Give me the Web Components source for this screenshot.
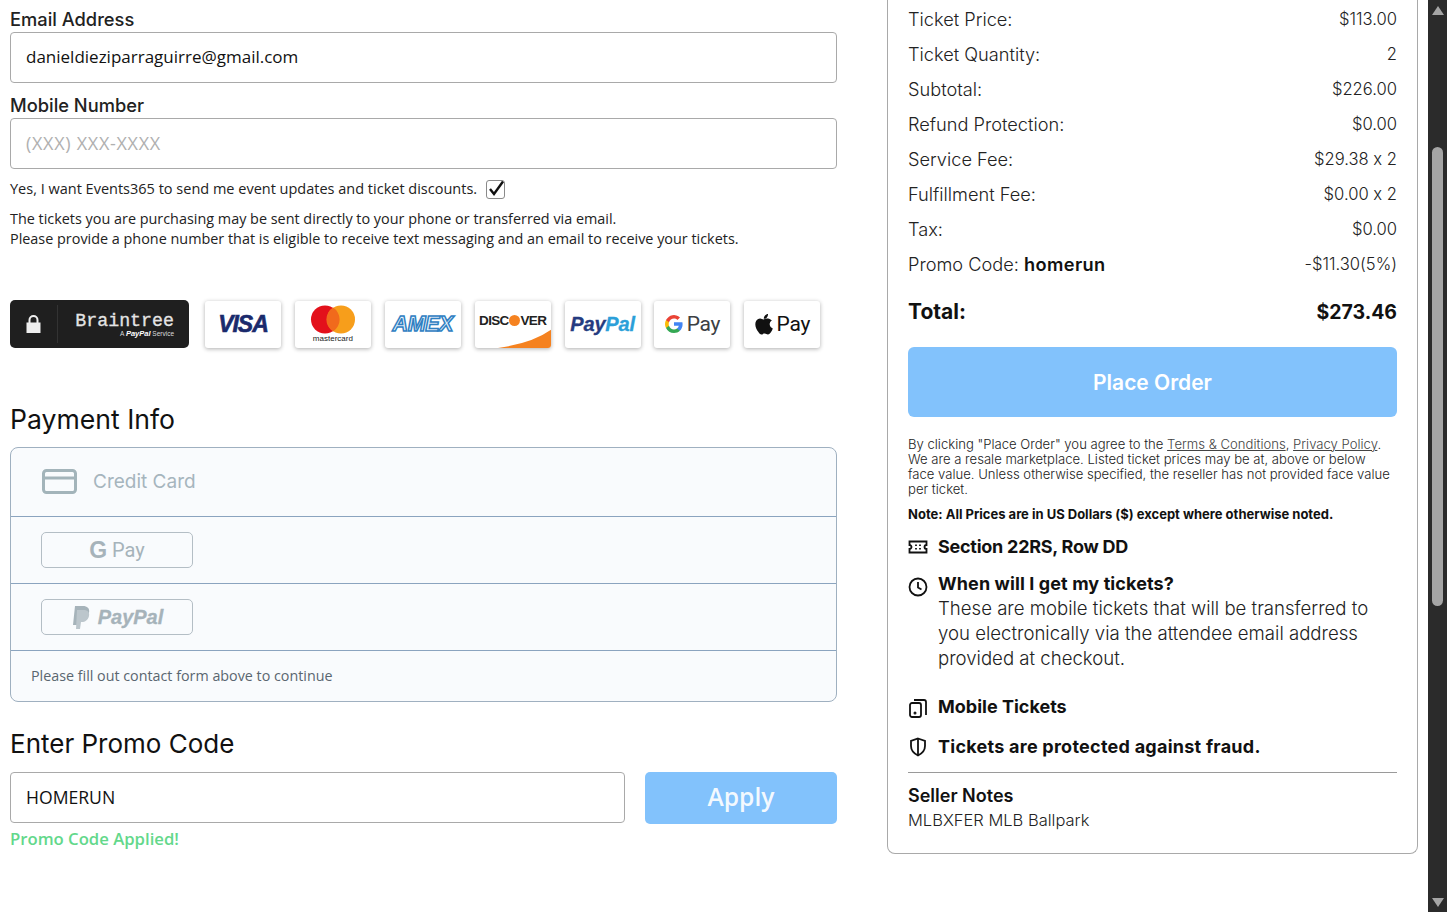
<!DOCTYPE html>
<html lang="en">
<head>
<meta charset="utf-8">
<title>Checkout</title>
<style>
  html, body { margin: 0; padding: 0; height: 100%; overflow: hidden; background: #fff; }
  body { font-family: "Open Sans", sans-serif; color: #111; }
</style>
</head>
<body>
<ev-page>
  <ev-contact slot="left"></ev-contact>
  <ev-pay-logos slot="left"></ev-pay-logos>
  <ev-payment slot="left"></ev-payment>
  <ev-promo slot="left"></ev-promo>
  <ev-summary slot="right"></ev-summary>
</ev-page>

<script>
const NUNITO = '"Open Sans", "Noto Sans", sans-serif';
const POPPINS = 'Inter, "Liberation Sans", sans-serif';

function define(name, html) {
    customElements.define(name, class extends HTMLElement {
        connectedCallback() {
            this.attachShadow({ mode: 'open' });
            this.shadowRoot.innerHTML = html;
        }
    });
}

define('ev-page', `
    <style>
        :host { display: flex; height: 912px; overflow: hidden; }
        .main { flex: 1; display: flex; align-items: flex-start; padding-left: 10px; }
        .left { width: 827px; margin-right: 50px; padding-top: 10px; }
        .right { width: 531px; }
        .bar { width: 19px; margin-left: 10px; background: #2b2b2b; display: flex; flex-direction: column; align-items: center; justify-content: space-between; padding: 6px 0 5px; box-sizing: border-box; position: relative; }
        .up { border: 6px solid transparent; border-top: 0; border-bottom: 9px solid #a5a5a5; }
        .down { border: 6px solid transparent; border-bottom: 0; border-top: 9px solid #a5a5a5; }
        .thumb { position: absolute; left: 4px; width: 11px; top: 147px; height: 459px; background: #a5a5a5; border-radius: 6px; }
    </style>
    <div class="main">
        <div class="left"><slot name="left"></slot></div>
        <div class="right"><slot name="right"></slot></div>
    </div>
    <div class="bar"><div class="up"></div><div class="thumb"></div><div class="down"></div></div>
`);

define('ev-contact', `
    <style>
        :host { display: block; font-family: ${NUNITO}; }
        label { display: block; font: 500 18.3px/19px ${POPPINS}; color: #222; margin-bottom: 3px; }
        .input { border: 1px solid #a9a9a9; border-radius: 4px; padding: 0 15px 2px; height: 47px; display: flex; align-items: center; font-size: 17px; color: #111; margin-bottom: 13px; }
        .ph { color: #b0b0b0; font-size: 18px; letter-spacing: .7px; }
        .opt { display: flex; align-items: center; font-size: 14.5px; line-height: 20px; color: #222; margin-top: -3px; gap: 9px; }
        .box { width: 17px; height: 17px; border: 1px solid #8a8a8a; border-radius: 3px; display: block; overflow: visible; }
        p { margin: 10px 0 0; font-size: 14.4px; line-height: 20px; color: #222; }
    </style>
    <label>Email Address</label>
    <div class="input">danieldieziparraguirre@gmail.com</div>
    <label>Mobile Number</label>
    <div class="input ph">(XXX) XXX-XXXX</div>
    <div class="opt">Yes, I want Events365 to send me event updates and ticket discounts.
        <svg class="box" viewBox="0 0 17 17"><path d="M3 8 L7 13 L16 0.500" fill="none" stroke="#111" stroke-width="2.4"/></svg>
    </div>
    <p>The tickets you are purchasing may be sent directly to your phone or transferred via email.<br>Please provide a phone number that is eligible to receive text messaging and an email to receive your tickets.</p>
`);

define('ev-pay-logos', `
    <style>
        :host { display: flex; margin-top: 51px; align-items: center; gap: 13.9px; }
        .bt { width: 179px; height: 48px; background: #1f1f1f; border-radius: 5px; color: #e4e4e4; display: flex; align-items: center; margin-right: 2.1px; }
        .lock { width: 47px; display: flex; justify-content: center; border-right: 1px solid #333; height: 38px; align-items: center; }
        .bt div.name { flex: 1; text-align: right; padding: 1px 15px 0 0; font: 400 18.3px/18px "Liberation Mono", monospace; -webkit-text-stroke: .3px #e4e4e4; }
        .bt small { display: block; font: 400 6.5px/8px "Liberation Sans", sans-serif; color: #ddd; -webkit-text-stroke: 0; }
        .bt em { font-weight: 700; font-size: 7.5px; color: #fff; }
        .card { width: 76px; height: 47px; background: #fff; border-radius: 3px; box-shadow: 0 1px 4px rgba(0,0,0,.32); display: flex; align-items: center; justify-content: center; position: relative; overflow: hidden; font-family: "Liberation Sans", sans-serif; }
        .visa { font: italic 700 23px "Liberation Sans", sans-serif; color: #1a2a6c; letter-spacing: -1px; -webkit-text-stroke: .6px #1a2a6c; }
        .mc { flex-direction: column; }
        .mc i { display: block; font: 400 8px/8px "Liberation Sans", sans-serif; color: #222; margin-top: 1px; }
        .amex { font: italic 700 21.5px "Liberation Sans", sans-serif; color: #e8f2fa; -webkit-text-stroke: 1.5px #2f80c2; letter-spacing: -.4px; }
        .disc { font: 700 13.5px/16px "Liberation Sans", sans-serif; color: #222; letter-spacing: -.7px; align-items: flex-start; padding-top: 12px; box-sizing: border-box; }
        .disc b { display: inline-block; width: 11px; height: 11px; font-size: 8px; line-height: 11px; text-align: center; letter-spacing: 0; border-radius: 50%; color: #f58220; background: #f58220; vertical-align: 1.5px; margin: 0 .5px; }
        .disc svg { position: absolute; left: 0; top: 0; }
        .pp { font: italic 700 20px "Liberation Sans", sans-serif; color: #253b80; letter-spacing: -.2px; -webkit-text-stroke: .3px #253b80; }
        .pp span { color: #2b9fd9; -webkit-text-stroke: .3px #2b9fd9; }
        .pay { font: 400 21px Roboto, "Liberation Sans", sans-serif; color: #3c4043; gap: 4px; letter-spacing: -.3px; }
        .apple { color: #111; gap: 3px; }
    </style>
    <div class="bt">
        <div class="lock"><svg width="17" height="20" viewBox="0 0 17 20"><path d="M4.500 9V6a4 4 0 0 1 8 0v3" fill="none" stroke="#eee" stroke-width="2"/><rect x="1.500" y="8.500" width="14" height="10.500" fill="#eee"/></svg></div>
        <div class="name">Braintree<small>A <em>PayPal</em> Service</small></div>
    </div>
    <div class="card visa">VISA</div>
    <div class="card mc">
        <svg width="46" height="29" viewBox="0 0 46 29"><circle cx="15" cy="14.500" r="14" fill="#e3111b"/><circle cx="31" cy="14.500" r="14" fill="#f79e1b"/><path d="M23 2.600a14 14 0 0 1 0 23.800a14 14 0 0 1 0-23.800z" fill="#f16a1c"/></svg>
        <i>mastercard</i>
    </div>
    <div class="card amex">AMEX</div>
    <div class="card disc">
        <svg width="77" height="47" viewBox="0 0 77 47"><path d="M23 47 Q58 42 77 28 V47 Z" fill="#f58220"/></svg>
        <span style="position:relative">DISC<b>O</b>VER</span>
    </div>
    <div class="card pp"><div>Pay<span>Pal</span></div></div>
    <div class="card pay">
        <svg width="18" height="18" viewBox="0 0 18 18"><path d="M17.600 9.200c0-.6-.1-1.300-.2-1.900H9v3.500h4.800a4.100 4.100 0 0 1-1.800 2.700v2.200h2.900c1.700-1.600 2.700-3.900 2.700-6.500z" fill="#4285f4"/><path d="M9 18c2.400 0 4.500-.8 5.900-2.200L12 13.500c-.8.500-1.800.9-3 .9-2.300 0-4.300-1.600-5-3.700H1v2.300A9 9 0 0 0 9 18z" fill="#34a853"/><path d="M4 10.700a5.400 5.400 0 0 1 0-3.400V5H1a9 9 0 0 0 0 8z" fill="#fbbc05"/><path d="M9 3.600c1.300 0 2.500.5 3.400 1.300L15 2.400A9 9 0 0 0 1 5l3 2.300c.7-2.100 2.700-3.700 5-3.700z" fill="#ea4335"/></svg>
        <span>Pay</span>
    </div>
    <div class="card pay apple">
        <svg width="19" height="22" viewBox="0 0 19 22"><path d="M13 1c.1 1.300-.4 2.500-1.100 3.400-.8.900-1.900 1.500-3.100 1.400-.1-1.200.5-2.500 1.200-3.300C10.700 1.600 12 1 13 1zM16.900 7.600c-1.900 1.200-2.300 2.800-2.200 4 .1 1.900 1.500 3.200 3.100 3.900-.5 1.300-1 2.500-1.900 3.700-.8 1.100-1.700 2.200-3 2.200-1.300 0-1.700-.8-3.200-.8s-2 .8-3.200.8c-1.300 0-2.300-1.200-3.100-2.400C.6 15.800-.6 11 1.100 8c.9-1.500 2.400-2.500 4-2.500 1.300 0 2.500.9 3.300.9.800 0 2.200-1.100 3.800-.9.700 0 2.900.3 4.700 2.100z" fill="#111"/></svg>
        <span style="color:#111">Pay</span>
    </div>
`);

define('ev-payment', `
    <style>
        :host { display: block; margin-top: 52px; font-family: ${POPPINS}; }
        h2 { margin: 0 0 9px; font-size: 26.6px; line-height: 38px; font-weight: 400; color: #111; }
        .box { border: 1px solid #9fb0c0; border-radius: 8px; background: #f9fbfd; }
        .row { display: flex; align-items: center; padding-left: 30px; border-bottom: 1px solid #8ba4bf; box-sizing: border-box; height: 67px; }
        .row.first { height: 69px; padding: 0 0 1px 31px; gap: 16px; font-size: 19px; color: #a6b5bd; font-weight: 400; }
        .btn { width: 152px; height: 36px; box-sizing: border-box; border: 1px solid #b4bec5; border-radius: 5px; display: flex; align-items: center; justify-content: center; color: #a6b3ba; font-family: Roboto, "Liberation Sans", sans-serif; }
        .gp { font-size: 20px; gap: 5px; }
        .gp b { font: 700 23px "Liberation Sans", sans-serif; }
        .pp { font: italic 700 20px "Liberation Sans", sans-serif; gap: 6px; -webkit-text-stroke: .3px #a6b3ba; }
        .note { height: 48px; padding: 0 0 2px 20px; display: flex; align-items: center; font: 400 14.3px ${NUNITO}; color: #5a6670; }
    </style>
    <h2>Payment Info</h2>
    <div class="box">
        <div class="row first">
            <svg width="35" height="25" viewBox="0 0 35 25" fill="none" stroke="#a3b4ba" stroke-width="3"><rect x="1.500" y="1.500" width="32" height="22" rx="3"/><path d="M1.500 9h32"/></svg>
            Credit Card
        </div>
        <div class="row"><div class="btn gp"><b>G</b><span>Pay</span></div></div>
        <div class="row"><div class="btn pp">
            <svg width="21" height="25" viewBox="0 0 19 25"><path d="M3 1h8c4 0 7 2 6 7-1 4-4 6-8 6H7l-1 6H1z" fill="#a6b3ba"/><path d="M5 5h7c3 0 6 2 5 6-1 4-4 6-7 6H9l-1 7H4z" fill="#bcc6cc"/></svg>
            PayPal
        </div></div>
        <div class="note">Please fill out contact form above to continue</div>
    </div>
`);

define('ev-promo', `
    <style>
        :host { display: block; margin-top: 23px; }
        h2 { margin: 0 0 9px; font: 400 26px/38px ${POPPINS}; color: #111; }
        .line { display: flex; gap: 20px; font-family: ${NUNITO}; align-items: flex-start; }
        .input { flex: 1; height: 47px; border: 1px solid #a9a9a9; border-radius: 4px; padding: 0 15px 2px; display: flex; align-items: center; font-size: 17.6px; color: #111; }
        .btn { width: 192px; height: 49px; padding-bottom: 3px; border-radius: 5px; background: #82c2fc; color: rgba(255,255,255,.92); font-size: 24.6px; font-weight: 600; display: flex; align-items: center; justify-content: center; }
        .ok { margin-top: 3px; font: 600 16.7px/24px ${NUNITO}; color: #63d88b; }
    </style>
    <h2>Enter Promo Code</h2>
    <div class="line"><div class="input">HOMERUN</div><div class="btn">Apply</div></div>
    <div class="ok">Promo Code Applied!</div>
`);

customElements.define('ev-line', class extends HTMLElement {
    connectedCallback() {
        this.attachShadow({ mode: 'open' }).innerHTML = `
            <style>
                :host { display: flex; justify-content: space-between; align-items: center; height: 35px; font-size: 18.2px; font-weight: 300; color: #222; }
                .v { font-size: 16.6px; }
            </style>
            <div><slot name="k"></slot></div><div class="v"><slot name="v"></slot></div>`;
    }
});

customElements.define('ev-info', class extends HTMLElement {
    connectedCallback() {
        this.attachShadow({ mode: 'open' }).innerHTML = `
            <style>
                :host { display: flex; gap: 10px; align-items: flex-start; }
                .i { width: 20px; height: 20px; flex: none; margin-top: var(--icon-top, 3px); }
            </style>
            <div class="i"><slot name="icon"></slot></div><div><slot></slot></div>`;
    }
});

const svg = (d, sw = 1.8) => `<svg slot="icon" width="20" height="20" viewBox="0 0 20 20" fill="none" stroke="#111" stroke-width="${sw}">${d}</svg>`;

customElements.define('ev-summary', class extends HTMLElement {
    connectedCallback() {
        const rows = [
            ['Ticket Price:', '$113.00'], ['Ticket Quantity:', '2'], ['Subtotal:', '$226.00'],
            ['Refund Protection:', '$0.00'], ['Service Fee:', '$29.38 x 2'], ['Fulfillment Fee:', '$0.00 x 2'],
            ['Tax:', '$0.00'], ['Promo Code: <b style="font-weight:600;color:#111;letter-spacing:.4px">homerun</b>', '-$11.30(5%)']
        ];
        this.attachShadow({ mode: 'open' }).innerHTML = `
            <style>
                :host { display: block; box-sizing: border-box; height: 854px; border: 1px solid #a9a9a9; border-top: 0; border-radius: 0 0 8px 8px; padding: 1px 20px 0; font-family: ${POPPINS}; font-feature-settings: "calt" 0; color: #111; }
                .total { display: flex; justify-content: space-between; font-size: 21px; line-height: 30px; font-weight: 700; margin-top: 16px; }
                .total span + span { font-size: 19.5px; }
                .order { height: 70px; margin-top: 20px; background: #82c2fc; border-radius: 6px; color: #fff; display: flex; align-items: center; justify-content: center; font-size: 21px; font-weight: 600; }
                .fine { margin-top: 20px; font-size: 13.1px; line-height: 15px; font-weight: 300; color: #222; }
                .fine u { color: #444; }
                .note { margin-top: 7px; font-size: 13px; line-height: 20px; font-weight: 700; }
                .strong { font-size: 18px; line-height: 25px; font-weight: 700; }
                .body { font-size: 18.6px; line-height: 25px; font-weight: 300; color: #222; }
                .a { margin-top: 10px; } .b { margin-top: 12px; --icon-top: 6px; } .c { margin-top: 23px; --icon-top: 4px; } .d { margin-top: 15px; }
                hr { border: 0; border-top: 1px solid #9a9a9a; margin: 13px 0 10px; }
                .sn { font-size: 18px; line-height: 25px; font-weight: 600; }
                .mlb { font-size: 16.5px; line-height: 25px; font-weight: 300; color: #222; }
            </style>
            ${rows.map(r => `<ev-line><span slot="k">${r[0]}</span><span slot="v">${r[1]}</span></ev-line>`).join('')}
            <div class="total"><span>Total:</span><span>$273.46</span></div>
            <div class="order">Place Order</div>
            <div class="fine">By clicking "Place Order" you agree to the <u>Terms &amp; Conditions</u>, <u>Privacy Policy</u>.<br>We are a resale marketplace. Listed ticket prices may be at, above or below<br>face value. Unless otherwise specified, the reseller has not provided face value<br>per ticket.</div>
            <div class="note">Note: All Prices are in US Dollars ($) except where otherwise noted.</div>
            <ev-info class="a">${svg('<path d="M1.500 4.500h17v3.500a2 2 0 0 0 0 4v3.500h-17V12a2 2 0 0 0 0-4z"/><path d="M8 7.500v1.500M8 11v1.500M12 7.500v1.500M12 11v1.500"/>')}<div class="strong" style="letter-spacing:-.25px">Section 22RS, Row DD</div></ev-info>
            <ev-info class="b">${svg('<circle cx="10" cy="10" r="8.500"/><path d="M10 5v5.500l3.500 2"/>')}<div><div class="strong" style="letter-spacing:.1px">When will I get my tickets?</div><div class="body">These are mobile tickets that will be transferred to<br>you electronically via the attendee email address<br>provided at checkout.</div></div></ev-info>
            <ev-info class="c">${svg('<rect x="2" y="5" width="11" height="14" rx="2"/><path d="M6 2h10a2 2 0 0 1 2 2v13"/><circle cx="7" cy="15" r=".6"/>')}<div class="strong">Mobile Tickets</div></ev-info>
            <ev-info class="d">${svg('<path d="M10 1.500l7 2.500v5c0 4.500-3 7.500-7 9.500-4-2-7-5-7-9.500V4z"/><path d="M10 1.500v17"/>')}<div class="strong" style="letter-spacing:.25px">Tickets are protected against fraud.</div></ev-info>
            <hr>
            <div class="sn">Seller Notes</div>
            <div class="mlb">MLBXFER MLB Ballpark</div>
        `;
    }
});
</script>
</body>
</html>
